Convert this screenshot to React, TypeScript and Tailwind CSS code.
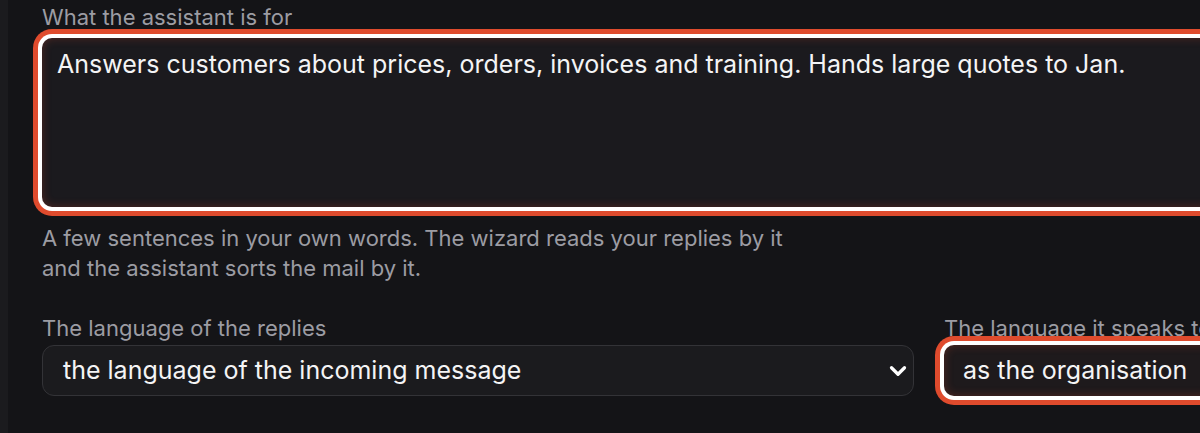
import { ChevronDown } from "lucide-react";

const fieldLabel = "block text-[22px] leading-[30px] text-[#9c9ca3]";

export default function App() {
  return (
    <div className="flex h-[433px] w-[1200px] overflow-hidden bg-[#141417] font-['Inter','Liberation_Sans',sans-serif]">
      <div className="w-[8px] shrink-0 bg-[#1b1b1e]" />
      <div className="flex w-[1500px] shrink-0 flex-col pl-[34px] pt-[2px]">
        <label className={fieldLabel}>What the assistant is for</label>
        <textarea
          readOnly
          defaultValue="Answers customers about prices, orders, invoices and training. Hands large quotes to Jan."
          className="mt-[6px] h-[169px] w-full resize-none rounded-[10px] bg-[#1b1a1e] px-[15px] pt-[8px] pb-[14px] text-[25px] leading-[36px] text-[#f4f4f5] outline-none shadow-[0_0_0_4px_#ffffff,0_0_0_9px_#df4b2d,inset_0_0_10px_rgba(223,75,45,0.28)]"
        />
        <p className="mt-[16px] w-[780px] text-[22px] leading-[30px] text-[#9c9ca3]">
          A few sentences in your own words. The wizard reads your replies by it and the assistant sorts the mail by it.
        </p>

        <div className="mt-[30px] grid grid-cols-[872px_1fr] gap-[30px]">
          <div className="flex flex-col">
            <label className={fieldLabel}>The language of the replies</label>
            <div className="mt-[2px] flex h-[51px] items-center justify-between rounded-[12px] border border-[#333337] bg-[#1b1b1e] pl-[20px] pr-[2px] text-[25px] text-[#f4f4f5]">
              <span>the language of the incoming message</span>
              <ChevronDown size={26} strokeWidth={3} className="text-white" />
            </div>
          </div>
          <div className="flex flex-col">
            <label className={fieldLabel + " whitespace-nowrap"}>The language it speaks to customers</label>
            <div className="mt-[2px] flex h-[51px] items-center rounded-[10px] bg-[#1e1a1c] pl-[19px] text-[25px] text-[#f4f4f5] shadow-[0_0_0_4px_#ffffff,0_0_0_9px_#df4b2d,inset_0_0_10px_rgba(223,75,45,0.28)]">
              as the organisation
            </div>
          </div>
        </div>
      </div>
    </div>
  );
}
